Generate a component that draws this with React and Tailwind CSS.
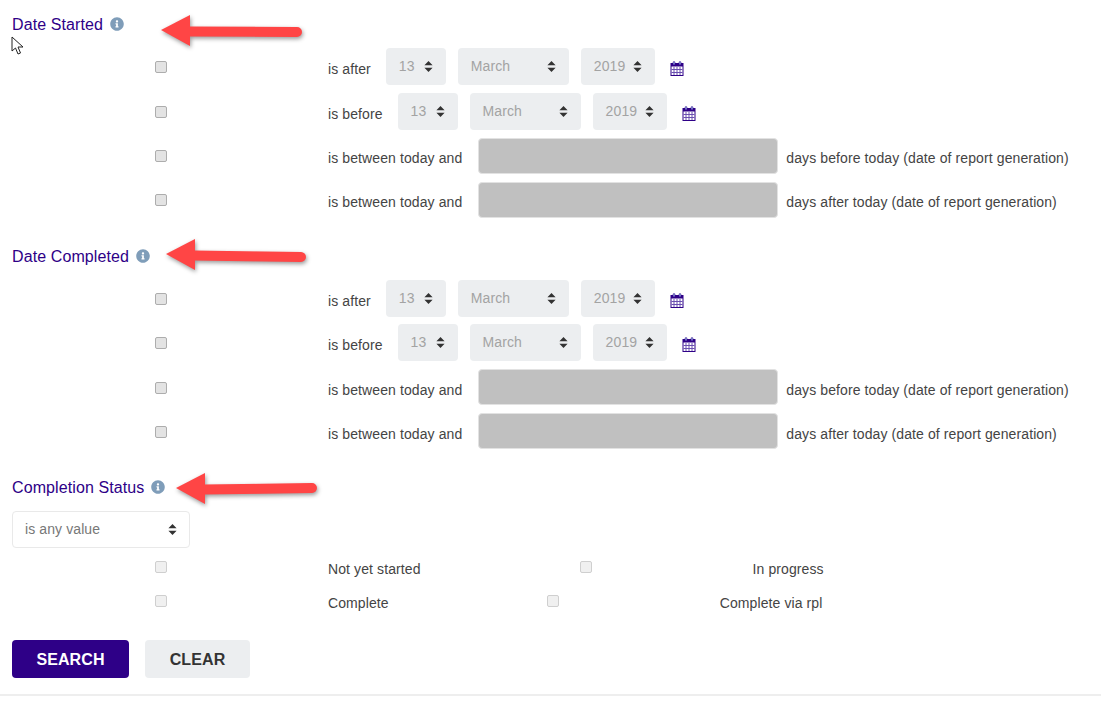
import { FaInfoCircle } from 'react-icons/fa';

const Sort = () => (
  <svg width="9" height="11" viewBox="0 0 9 11" className="shrink-0 text-[#333]" fill="currentColor">
    <path d="M4.5 0 8.6 4.2H.4zM4.5 11 .4 6.8h8.2z" />
  </svg>
);

const CalendarIcon = () => (
  <svg width="14" height="15" viewBox="0 0 14 15" className="shrink-0">
    <rect x="1" y="2.5" width="12" height="12" fill="#fff" stroke="#2e0087" />
    <rect x="1" y="2.5" width="12" height="3" fill="#2e0087" />
    <path d="M4 6v8M7 6v8M10 6v8M1.5 8.5h11M1.5 11.5h11" stroke="#6a4fb0" strokeWidth="1" />
    <rect x="3" y="0.5" width="2" height="3.5" rx="1" fill="#8a9ad8" stroke="#2e0087" strokeWidth="0.5" />
    <rect x="9" y="0.5" width="2" height="3.5" rx="1" fill="#8a9ad8" stroke="#2e0087" strokeWidth="0.5" />
  </svg>
);

const Check = ({ faded }) => (
  <input
    type="checkbox"
    disabled
    className={`appearance-none block w-[12px] h-[12px] rounded-[2px] border ${faded ? 'bg-[#f0f0f0] border-[#cfcfcf]' : 'bg-[#e3e3e3] border-[#adadad]'}`}
  />
);

const Heading = ({ text }) => (
  <div className="h-[48px] pl-[12px] flex items-center gap-[7px] text-[16px] text-[#2e0087]">
    <span className="mt-[2px]">{text}</span>
    <FaInfoCircle size={14} className="text-[#7f9db9]" />
  </div>
);

const Sel = ({ value, w }) => (
  <div className={`${w} px-[13px] h-[37px] flex items-center justify-between rounded-[4px] bg-[#eceef0] text-[14px] text-[#a3a3a3]`}>
    <span className="-mt-[1px]">{value}</span>
    <Sort />
  </div>
);

const Row = ({ children, className = '', checkTop = 'pt-[13px]' }) => (
  <div className={`flex items-start ${className}`}>
    <div className={`w-[328px] pl-[155px] ${checkTop}`}>
      <Check />
    </div>
    {children}
  </div>
);

const DateRow = ({ label, className }) => (
  <Row className={className}>
    <span className="mt-[12px] mr-[15px] leading-[18px]">{label}</span>
    <div className="flex gap-[12px]">
      <Sel value="13" w="w-[60px]" />
      <Sel value="March" w="w-[111px]" />
      <Sel value="2019" w="w-[74px]" />
    </div>
    <div className="ml-[15px] mt-[13px]">
      <CalendarIcon />
    </div>
  </Row>
);

const RangeRow = ({ suffix, low }) => (
  <Row className="mt-[8px]" checkTop={low ? 'pt-[13px]' : 'pt-[12px]'}>
    <span className={`${low ? 'mt-[12px]' : 'mt-[11px]'} mr-[16px] leading-[18px]`}>is between today and</span>
    <div className="w-[300px] h-[36px] rounded-[4px] bg-[#c0c0c0] border border-[#e2e2e2]" />
    <span className={`${low ? 'mt-[12px]' : 'mt-[11px]'} ml-[8px] leading-[18px] whitespace-nowrap`}>{suffix}</span>
  </Row>
);

const DateBlock = ({ title, secondGap, low }) => (
  <div className="mb-[14px]">
    <Heading text={title} />
    <DateRow label="is after" />
    <DateRow label="is before" className={secondGap} />
    <RangeRow suffix="days before today (date of report generation)" low={low} />
    <RangeRow suffix="days after today (date of report generation)" low={low} />
  </div>
);

const StatusRow = ({ left, right, gap, className }) => (
  <div className={`flex items-start h-[18px] leading-[18px] ${className}`}>
    <div className="w-[328px] pl-[155px] pt-[1px]">
      <Check faded />
    </div>
    <span>{left}</span>
    <div className={`${gap} mr-[161px] pt-[1px]`}>
      <Check faded />
    </div>
    <span>{right}</span>
  </div>
);

const Arrow = ({ tipX, tipY, tailX, tailY }) => (
  <svg
    className="absolute top-0 left-0 pointer-events-none drop-shadow-[1px_2px_2px_rgba(0,0,0,0.4)]"
    width="1101"
    height="710"
  >
    <path d={`M${tipX + 28} ${tipY + 1.5}L${tailX} ${tailY}`} stroke="#ff4545" strokeWidth="10" strokeLinecap="round" />
    <path d={`M${tipX} ${tipY}L${tipX + 29} ${tipY - 15}V${tipY + 16}Z`} fill="#ff4545" />
  </svg>
);

export default function App() {
  return (
    <div className="relative w-[1101px] h-[710px] overflow-hidden bg-white font-['Liberation_Sans',Arial,sans-serif] text-[14px] tracking-[0.1px] text-[#444]">
      <DateBlock title="Date Started" secondGap="mt-[8px]" />
      <DateBlock title="Date Completed" secondGap="mt-[7px]" low />

      <Heading text="Completion Status" />
      <div className="ml-[12px] w-[178px] h-[37px] px-[12px] flex items-center justify-between rounded-[4px] border border-[#e9e9e9] text-[#777]">
        is any value
        <Sort />
      </div>
      <StatusRow left="Not yet started" right="In progress" gap="ml-[159px]" className="mt-[12px]" />
      <StatusRow left="Complete" right="Complete via rpl" gap="ml-[158px]" className="mt-[16px]" />

      <div className="flex gap-[16px] pl-[12px] mt-[28px]">
        <button className="w-[117px] h-[38px] pt-[1px] rounded-[4px] bg-[#2e0087] text-white font-bold text-[16px]">SEARCH</button>
        <button className="w-[105px] h-[38px] pt-[1px] rounded-[4px] bg-[#eceef0] text-[#333] font-bold text-[16px]">CLEAR</button>
      </div>
      <div className="mt-[16px] h-[2px] bg-[#eeeeee]" />

      <Arrow tipX={161} tipY={30} tailX={297} tailY={32} />
      <Arrow tipX={166} tipY={254} tailX={301} tailY={257} />
      <Arrow tipX={176} tipY={488} tailX={312} tailY={488} />

      {/* mouse pointer */}
      <svg className="absolute left-[11px] top-[36px]" width="13" height="20" viewBox="0 0 13 20">
        <path d="M1 1v14l3.5-3 2.5 6 2.5-1-2.5-6H12Z" fill="#fff" stroke="#222" strokeWidth="1" />
      </svg>
    </div>
  );
}
